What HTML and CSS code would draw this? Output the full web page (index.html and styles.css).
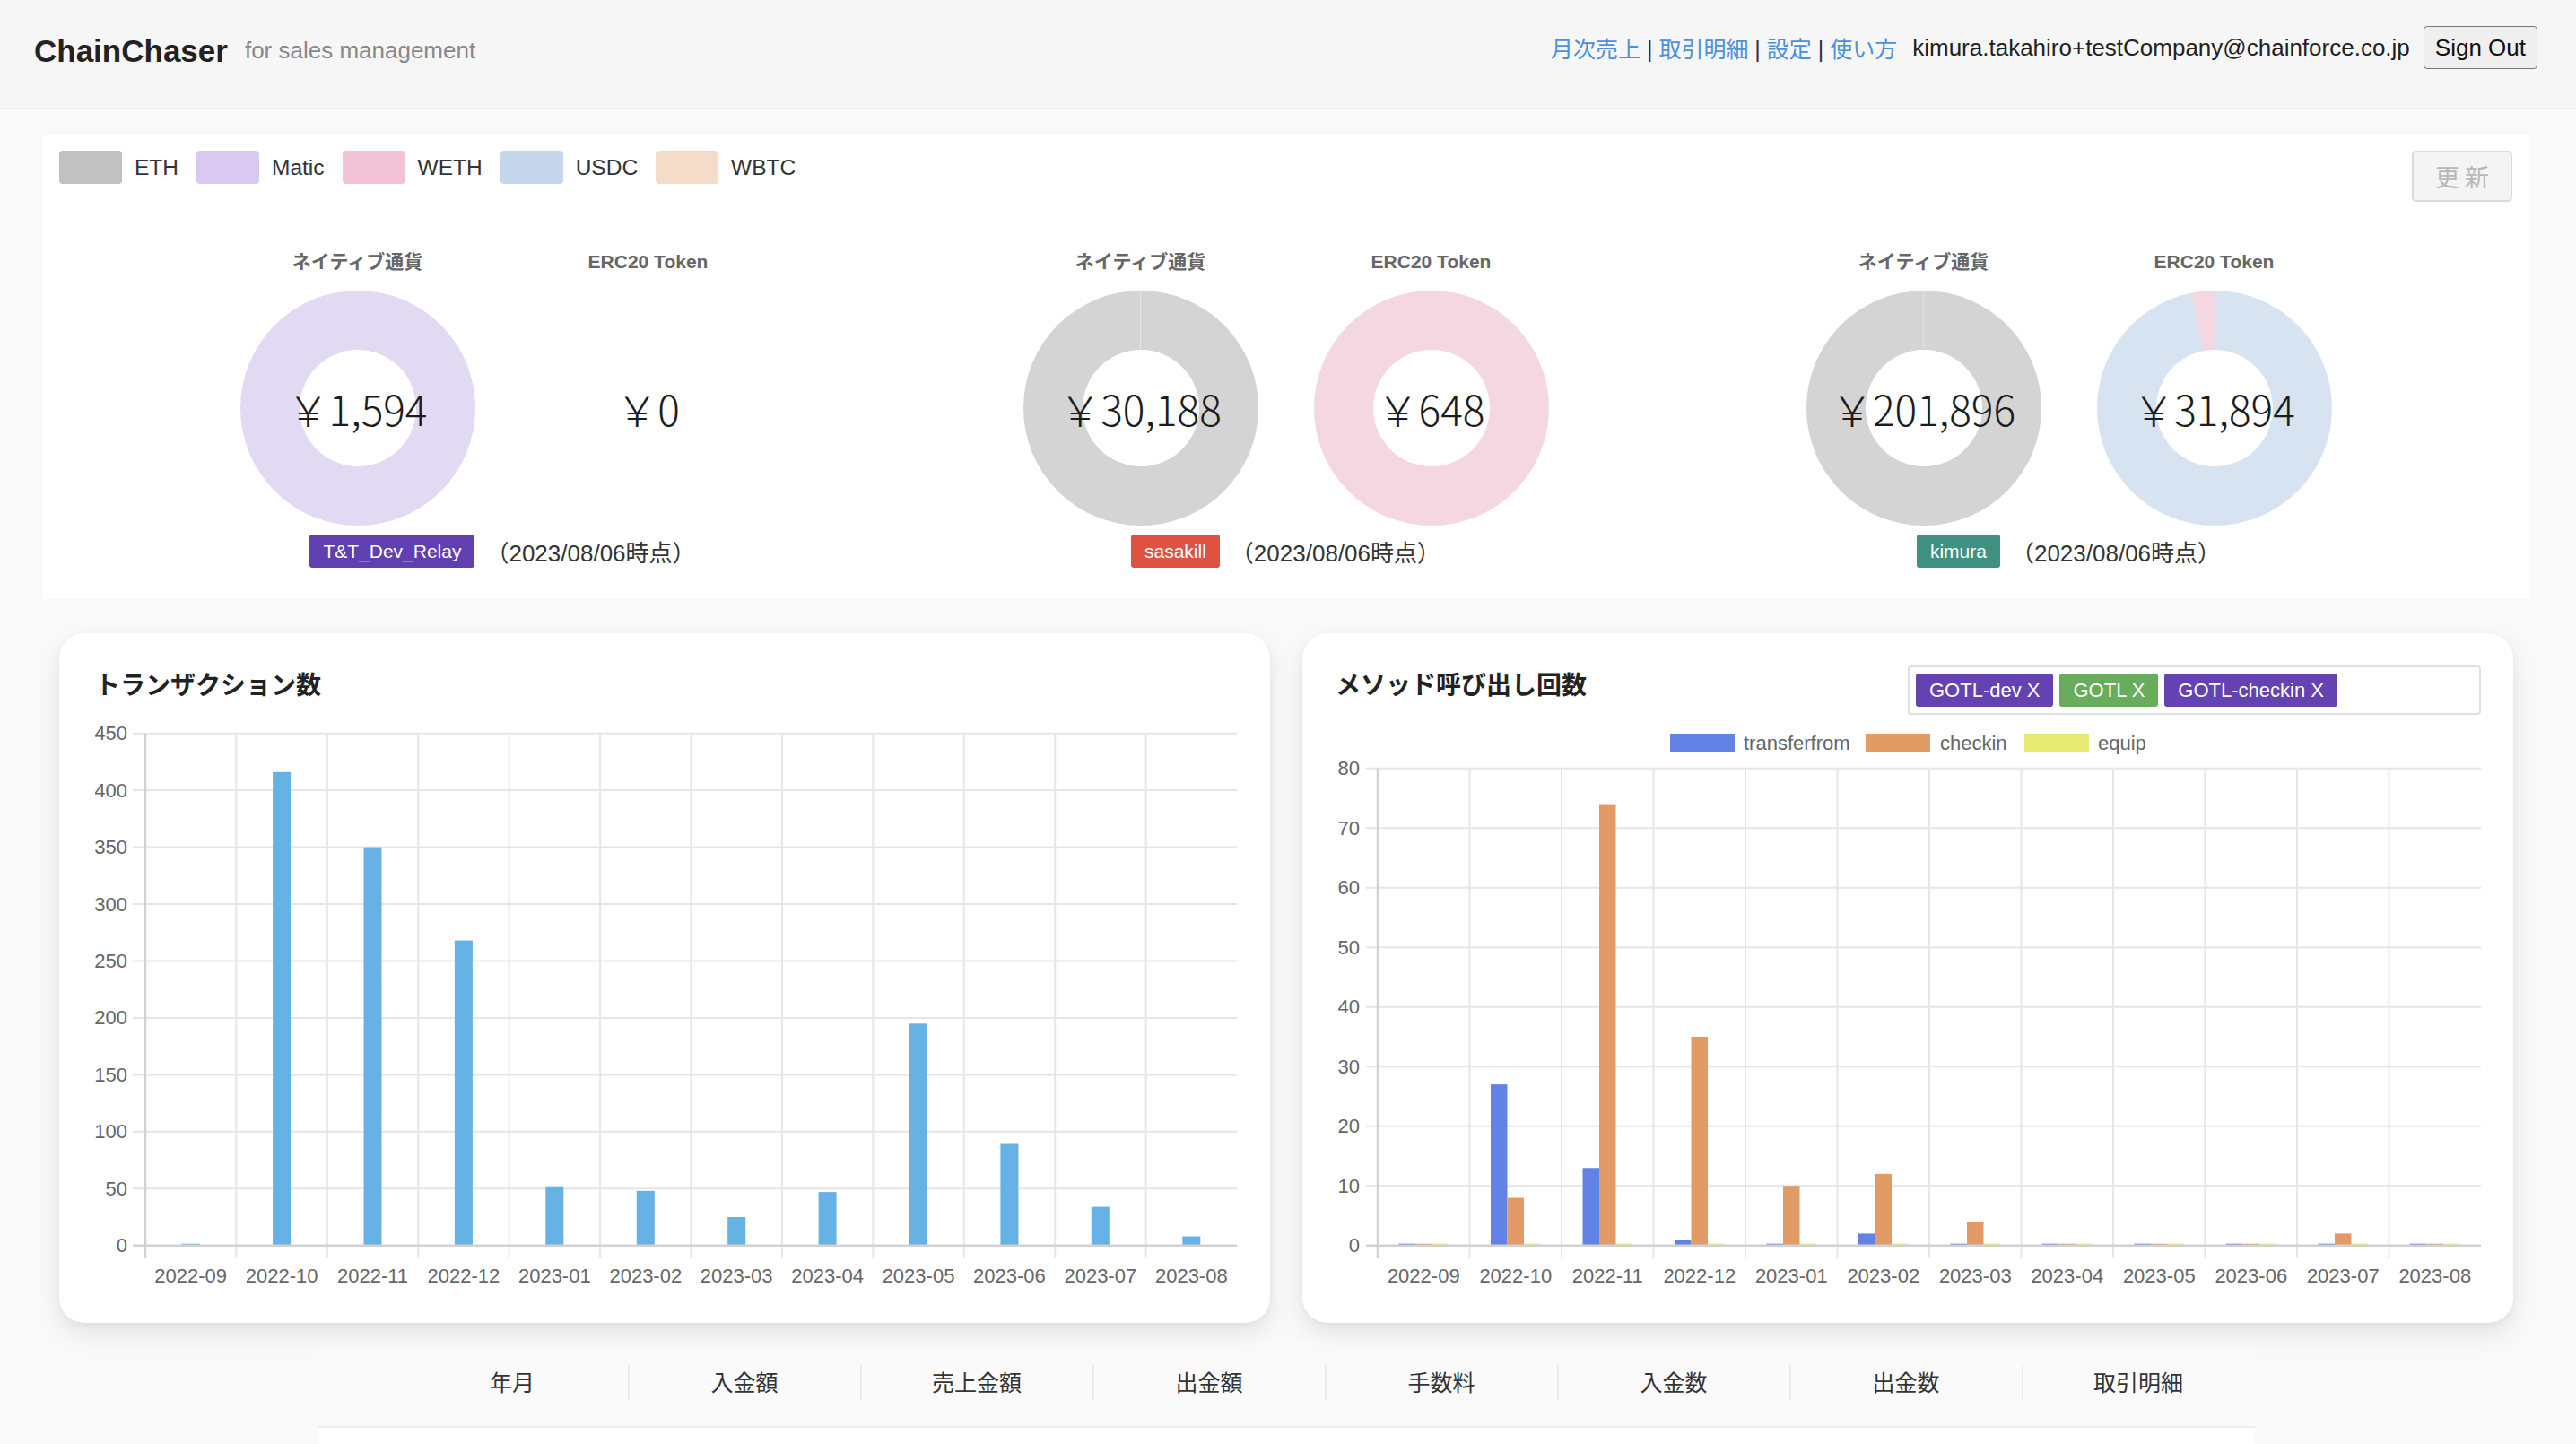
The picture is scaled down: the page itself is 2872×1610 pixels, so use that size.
FILE: index.html
```html
<!DOCTYPE html>
<html lang="ja">
<head>
<meta charset="utf-8">
<title>ChainChaser</title>
<link rel="stylesheet" href="styles.css">
</head>
<body>
<header class="topbar">
  <div class="brand">
    <span class="logo">ChainChaser</span>
    <span class="tagline">for sales management</span>
  </div>
  <div class="account">
    <nav class="links"><a href="#">月次売上</a> | <a href="#">取引明細</a> | <a href="#">設定</a> | <a href="#">使い方</a></nav>
    <span class="email">kimura.takahiro+testCompany@chainforce.co.jp</span>
    <button class="signout">Sign Out</button>
  </div>
</header>

<main class="main">
  <section class="panel">
    <div class="panel-top">
      <ul class="legend">
        <li><span class="sw sw-eth"></span>ETH</li>
        <li><span class="sw sw-matic"></span>Matic</li>
        <li><span class="sw sw-weth"></span>WETH</li>
        <li><span class="sw sw-usdc"></span>USDC</li>
        <li><span class="sw sw-wbtc"></span>WBTC</li>
      </ul>
      <button class="refresh">更 新</button>
    </div>

    <div class="groups">
      <div class="group">
        <div class="pair">
          <div class="col">
            <div class="col-title">ネイティブ通貨</div>
            <div class="donut d-matic"><span class="val">￥1,594</span></div>
          </div>
          <div class="col">
            <div class="col-title">ERC20 Token</div>
            <div class="donut empty"><span class="val">￥0</span></div>
          </div>
        </div>
        <div class="meta"><span class="badge b-purple">T&amp;T_Dev_Relay</span><span class="asof">（2023/08/06時点）</span></div>
      </div>

      <div class="group">
        <div class="pair">
          <div class="col">
            <div class="col-title">ネイティブ通貨</div>
            <div class="donut d-eth-a"><span class="val">￥30,188</span></div>
          </div>
          <div class="col">
            <div class="col-title">ERC20 Token</div>
            <div class="donut d-weth"><span class="val">￥648</span></div>
          </div>
        </div>
        <div class="meta"><span class="badge b-red">sasakill</span><span class="asof">（2023/08/06時点）</span></div>
      </div>

      <div class="group">
        <div class="pair">
          <div class="col">
            <div class="col-title">ネイティブ通貨</div>
            <div class="donut d-eth-b"><span class="val">￥201,896</span></div>
          </div>
          <div class="col">
            <div class="col-title">ERC20 Token</div>
            <div class="donut d-usdc"><span class="val">￥31,894</span></div>
          </div>
        </div>
        <div class="meta"><span class="badge b-teal">kimura</span><span class="asof">（2023/08/06時点）</span></div>
      </div>
    </div>
  </section>

  <section class="charts">
    <div class="card card-1">
      <div class="card-head">
        <h2 class="card-title">トランザクション数</h2>
      </div>
      <svg class="chart" width="1273" height="643" viewBox="0 0 1273 643">
        <g class="grid">
          <line x1="42" x2="1273" y1="528.3" y2="528.3"/>
          <line x1="42" x2="1273" y1="464.8" y2="464.8"/>
          <line x1="42" x2="1273" y1="401.4" y2="401.4"/>
          <line x1="42" x2="1273" y1="337.9" y2="337.9"/>
          <line x1="42" x2="1273" y1="274.5" y2="274.5"/>
          <line x1="42" x2="1273" y1="211" y2="211"/>
          <line x1="42" x2="1273" y1="147.6" y2="147.6"/>
          <line x1="42" x2="1273" y1="84.1" y2="84.1"/>
          <line x1="42" x2="1273" y1="20.7" y2="20.7"/>
          <line x1="157.4" x2="157.4" y1="20.7" y2="606"/>
          <line x1="258.8" x2="258.8" y1="20.7" y2="606"/>
          <line x1="360.3" x2="360.3" y1="20.7" y2="606"/>
          <line x1="461.7" x2="461.7" y1="20.7" y2="606"/>
          <line x1="563.1" x2="563.1" y1="20.7" y2="606"/>
          <line x1="664.5" x2="664.5" y1="20.7" y2="606"/>
          <line x1="765.9" x2="765.9" y1="20.7" y2="606"/>
          <line x1="867.3" x2="867.3" y1="20.7" y2="606"/>
          <line x1="968.8" x2="968.8" y1="20.7" y2="606"/>
          <line x1="1070.2" x2="1070.2" y1="20.7" y2="606"/>
          <line x1="1171.6" x2="1171.6" y1="20.7" y2="606"/>
        </g>
        <g class="bars-blue">
          <rect x="96.7" y="589.7" width="20" height="2"/>
          <rect x="198.1" y="63.8" width="20" height="527.9"/>
          <rect x="299.5" y="147.6" width="20" height="444.1"/>
          <rect x="400.9" y="251.6" width="20" height="340.1"/>
          <rect x="502.3" y="525.7" width="20" height="66"/>
          <rect x="603.8" y="530.8" width="20" height="60.9"/>
          <rect x="705.2" y="560" width="20" height="31.7"/>
          <rect x="806.6" y="532.1" width="20" height="59.6"/>
          <rect x="908" y="344.3" width="20" height="247.4"/>
          <rect x="1009.4" y="477.5" width="20" height="114.2"/>
          <rect x="1110.8" y="548.6" width="20" height="43.1"/>
          <rect x="1212.3" y="581.5" width="20" height="10.2"/>
        </g>
        <g class="axis">
          <line x1="42" x2="1273" y1="591.7" y2="591.7"/>
          <line x1="56" x2="56" y1="20.7" y2="606"/>
        </g>
        <g class="ylab">
          <text x="36" y="591.7">0</text>
          <text x="36" y="528.3">50</text>
          <text x="36" y="464.8">100</text>
          <text x="36" y="401.4">150</text>
          <text x="36" y="337.9">200</text>
          <text x="36" y="274.5">250</text>
          <text x="36" y="211">300</text>
          <text x="36" y="147.6">350</text>
          <text x="36" y="84.1">400</text>
          <text x="36" y="20.7">450</text>
        </g>
        <g class="xlab">
          <text x="106.7" y="625">2022-09</text>
          <text x="208.1" y="625">2022-10</text>
          <text x="309.5" y="625">2022-11</text>
          <text x="410.9" y="625">2022-12</text>
          <text x="512.3" y="625">2023-01</text>
          <text x="613.8" y="625">2023-02</text>
          <text x="715.2" y="625">2023-03</text>
          <text x="816.6" y="625">2023-04</text>
          <text x="918" y="625">2023-05</text>
          <text x="1019.4" y="625">2023-06</text>
          <text x="1120.8" y="625">2023-07</text>
          <text x="1222.3" y="625">2023-08</text>
        </g>
      </svg>
    </div>

    <div class="card card-2">
      <div class="card-head">
        <h2 class="card-title">メソッド呼び出し回数</h2>
        <div class="tagbox">
          <span class="tag t-purple">GOTL-dev X</span>
          <span class="tag t-green">GOTL X</span>
          <span class="tag t-purple">GOTL-checkin X</span>
        </div>
      </div>
      <svg class="chart" width="1277" height="643" viewBox="0 0 1277 643">
        <g class="legend2">
          <rect x="373" y="21" width="72" height="20" class="c-blue"/>
          <text x="455" y="31">transferfrom</text>
          <rect x="591" y="21" width="72" height="20" class="c-orange"/>
          <text x="674" y="31">checkin</text>
          <rect x="768" y="21" width="72" height="20" class="c-yellow"/>
          <text x="850" y="31">equip</text>
        </g>
        <g class="grid">
          <line x1="34" x2="1277" y1="525.2" y2="525.2"/>
          <line x1="34" x2="1277" y1="458.7" y2="458.7"/>
          <line x1="34" x2="1277" y1="392.2" y2="392.2"/>
          <line x1="34" x2="1277" y1="325.7" y2="325.7"/>
          <line x1="34" x2="1277" y1="259.2" y2="259.2"/>
          <line x1="34" x2="1277" y1="192.7" y2="192.7"/>
          <line x1="34" x2="1277" y1="126.2" y2="126.2"/>
          <line x1="34" x2="1277" y1="59.7" y2="59.7"/>
          <line x1="149.5" x2="149.5" y1="59.7" y2="606"/>
          <line x1="252" x2="252" y1="59.7" y2="606"/>
          <line x1="354.5" x2="354.5" y1="59.7" y2="606"/>
          <line x1="457" x2="457" y1="59.7" y2="606"/>
          <line x1="559.5" x2="559.5" y1="59.7" y2="606"/>
          <line x1="662" x2="662" y1="59.7" y2="606"/>
          <line x1="764.5" x2="764.5" y1="59.7" y2="606"/>
          <line x1="867" x2="867" y1="59.7" y2="606"/>
          <line x1="969.5" x2="969.5" y1="59.7" y2="606"/>
          <line x1="1072" x2="1072" y1="59.7" y2="606"/>
          <line x1="1174.5" x2="1174.5" y1="59.7" y2="606"/>
        </g>
        <g class="c-blue">
          <rect x="70.5" y="589.7" width="18.5" height="2"/>
          <rect x="173" y="412.15" width="18.5" height="179.55"/>
          <rect x="275.5" y="505.25" width="18.5" height="86.45"/>
          <rect x="378" y="585.05" width="18.5" height="6.65"/>
          <rect x="480.5" y="589.7" width="18.5" height="2"/>
          <rect x="583" y="578.4" width="18.5" height="13.3"/>
          <rect x="685.5" y="589.7" width="18.5" height="2"/>
          <rect x="788" y="589.7" width="18.5" height="2"/>
          <rect x="890.5" y="589.7" width="18.5" height="2"/>
          <rect x="993" y="589.7" width="18.5" height="2"/>
          <rect x="1095.5" y="589.7" width="18.5" height="2"/>
          <rect x="1198" y="589.7" width="18.5" height="2"/>
        </g>
        <g class="c-orange">
          <rect x="89" y="589.7" width="18.5" height="2"/>
          <rect x="191.5" y="538.5" width="18.5" height="53.2"/>
          <rect x="294" y="99.6" width="18.5" height="492.1"/>
          <rect x="396.5" y="358.95" width="18.5" height="232.75"/>
          <rect x="499" y="525.2" width="18.5" height="66.5"/>
          <rect x="601.5" y="511.9" width="18.5" height="79.8"/>
          <rect x="704" y="565.1" width="18.5" height="26.6"/>
          <rect x="806.5" y="589.7" width="18.5" height="2"/>
          <rect x="909" y="589.7" width="18.5" height="2"/>
          <rect x="1011.5" y="589.7" width="18.5" height="2"/>
          <rect x="1114" y="578.4" width="18.5" height="13.3"/>
          <rect x="1216.5" y="589.7" width="18.5" height="2"/>
        </g>
        <g class="c-yellow">
          <rect x="107.5" y="589.7" width="18.5" height="2"/>
          <rect x="210" y="589.7" width="18.5" height="2"/>
          <rect x="312.5" y="589.7" width="18.5" height="2"/>
          <rect x="415" y="589.7" width="18.5" height="2"/>
          <rect x="517.5" y="589.7" width="18.5" height="2"/>
          <rect x="620" y="589.7" width="18.5" height="2"/>
          <rect x="722.5" y="589.7" width="18.5" height="2"/>
          <rect x="825" y="589.7" width="18.5" height="2"/>
          <rect x="927.5" y="589.7" width="18.5" height="2"/>
          <rect x="1030" y="589.7" width="18.5" height="2"/>
          <rect x="1132.5" y="589.7" width="18.5" height="2"/>
          <rect x="1235" y="589.7" width="18.5" height="2"/>
        </g>
        <g class="axis">
          <line x1="34" x2="1277" y1="591.7" y2="591.7"/>
          <line x1="47" x2="47" y1="59.7" y2="606"/>
        </g>
        <g class="ylab">
          <text x="27" y="591.7">0</text>
          <text x="27" y="525.2">10</text>
          <text x="27" y="458.7">20</text>
          <text x="27" y="392.2">30</text>
          <text x="27" y="325.7">40</text>
          <text x="27" y="259.2">50</text>
          <text x="27" y="192.7">60</text>
          <text x="27" y="126.2">70</text>
          <text x="27" y="59.7">80</text>
        </g>
        <g class="xlab">
          <text x="98.25" y="625">2022-09</text>
          <text x="200.75" y="625">2022-10</text>
          <text x="303.25" y="625">2022-11</text>
          <text x="405.75" y="625">2022-12</text>
          <text x="508.25" y="625">2023-01</text>
          <text x="610.75" y="625">2023-02</text>
          <text x="713.25" y="625">2023-03</text>
          <text x="815.75" y="625">2023-04</text>
          <text x="918.25" y="625">2023-05</text>
          <text x="1020.75" y="625">2023-06</text>
          <text x="1123.25" y="625">2023-07</text>
          <text x="1225.75" y="625">2023-08</text>
        </g>
      </svg>
    </div>
  </section>

  <section class="table">
    <div class="thead">
      <div class="th-blank"></div>
      <div class="th first">年月</div>
      <div class="th">入金額</div>
      <div class="th">売上金額</div>
      <div class="th">出金額</div>
      <div class="th">手数料</div>
      <div class="th">入金数</div>
      <div class="th">出金数</div>
      <div class="th">取引明細</div>
    </div>
    <div class="tbody"></div>
  </section>
</main>
</body>
</html>
```

FILE: styles.css
```css
* { box-sizing: border-box; }

body {
  margin: 0;
  background: #f9f9f9;
  font-family: "Liberation Sans", "Noto Sans CJK JP", sans-serif;
  color: #333;
}

/* Header */
.topbar {
  height: 122px;
  background: #f6f6f6;
  border-bottom: 2px solid #ebebeb;
  display: flex;
  align-items: center;
  justify-content: space-between;
  padding: 0 43px 14px 38px;
}
.brand {
  display: flex;
  align-items: center;
  margin-top: 6px;
}
.logo {
  font-size: 35px;
  font-weight: 700;
  color: #222;
  line-height: 1;
}
.tagline {
  font-size: 26px;
  color: #888;
  margin-left: 19px;
  line-height: 1;
}
.account {
  display: flex;
  align-items: center;
}
.links {
  font-size: 25px;
  color: #333;
  font-family: "Liberation Sans", "Noto Sans CJK JP", sans-serif;
}
.links a {
  color: #4a90e2;
  text-decoration: none;
}
.email {
  font-size: 26px;
  color: #222;
  margin-left: 17px;
}
.signout {
  margin-left: 15px;
  height: 48px;
  padding: 0 12px;
  font-family: "Liberation Sans", sans-serif;
  font-size: 26px;
  background: #efefef;
  border: 1px solid #767676;
  border-radius: 4px;
  color: #111;
}

/* Main */
.main {
  padding: 28px 52px 0 48px;
}

.panel {
  background: #fff;
  padding: 18px 19px 35px 18px;
}
.panel-top {
  display: flex;
  justify-content: space-between;
  align-items: flex-start;
}
.legend {
  display: flex;
  list-style: none;
  margin: 0;
  padding: 0;
  gap: 20px;
}
.legend li {
  display: flex;
  align-items: center;
  gap: 14px;
  height: 37px;
  font-size: 24.5px;
  color: #333;
}
.sw {
  width: 70px;
  height: 37px;
  border-radius: 4px;
}
.sw-eth { background: #c1c1c1; }
.sw-matic { background: #d9c9f1; }
.sw-weth { background: #f2c2d6; }
.sw-usdc { background: #c5d5eb; }
.sw-wbtc { background: #f5dcc9; }

.refresh {
  width: 112px;
  height: 57px;
  background: #f4f4f4;
  border: 2px solid #dadada;
  border-radius: 5px;
  color: #b8b8b8;
  font-family: "Noto Sans CJK JP", sans-serif;
  font-size: 27px;
  padding: 0;
}

.groups {
  display: grid;
  grid-template-columns: repeat(3, 1fr);
  margin: 54px 58px 0;
}
.group {
  display: flex;
  flex-direction: column;
  align-items: center;
}
.pair {
  display: flex;
}
.col {
  width: 324px;
  display: flex;
  flex-direction: column;
  align-items: center;
}
.col-title {
  font-size: 21px;
  font-weight: 700;
  color: #666;
  line-height: 26px;
}
.donut {
  margin-top: 19px;
  width: 262px;
  height: 262px;
  border-radius: 50%;
  display: grid;
  place-items: center;
}
.donut::before {
  content: "";
  grid-area: 1 / 1;
  width: 130px;
  height: 130px;
  border-radius: 50%;
  background: #fff;
}
.donut.empty { background: none; }
.donut.empty::before { display: none; }
.donut .val {
  grid-area: 1 / 1;
  position: relative;
  z-index: 1;
  font-family: "Noto Sans CJK JP", sans-serif;
  font-weight: 300;
  font-size: 46px;
  line-height: 1;
  color: #1c1c1c;
  white-space: nowrap;
}
.d-matic { background: #e2d9f3; }
.d-weth { background: #f5d7e2; }
.d-eth-a { background: conic-gradient(#d4d4d4 0deg 359.4deg, #e6e3ea 359.4deg 360deg); }
.d-eth-b { background: conic-gradient(#d4d4d4 0deg 359.5deg, #e2d9f3 359.5deg 360deg); }
.d-usdc { background: conic-gradient(#d8e3f1 0deg 348.8deg, #f5d7e2 348.8deg 360deg); }

.meta {
  display: flex;
  align-items: center;
  gap: 12px;
  margin-top: 10px;
  height: 37px;
}
.badge {
  height: 37px;
  line-height: 37px;
  padding: 0 15px;
  font-size: 21px;
  color: #fff;
  border-radius: 3px;
}
.b-purple { background: #6040b0; }
.b-red { background: #e05241; }
.b-teal { background: #3f9282; }
.asof {
  font-size: 26px;
  color: #333;
}

/* Charts */
.charts {
  display: grid;
  grid-template-columns: 1fr 1fr;
  gap: 36px;
  margin: 38px 18px 0;
}
.card {
  background: #fff;
  border-radius: 28px;
  height: 769px;
  padding: 36px 37px 0 40px;
  box-shadow: 0 12px 28px rgba(0, 0, 0, 0.09), 0 2px 8px rgba(0, 0, 0, 0.04);
}
.card-2 {
  padding: 36px 36px 0 37px;
}
.card-head {
  display: flex;
  justify-content: space-between;
  height: 55px;
}
.card-title {
  margin: 6px 0 0;
  font-size: 28px;
  font-weight: 700;
  color: #222;
  line-height: 34px;
}
.tagbox {
  width: 639px;
  height: 55px;
  border: 2px solid #e0e0e0;
  border-radius: 4px;
  display: flex;
  align-items: center;
  gap: 7px;
  padding: 0 7px;
}
.tag {
  height: 37px;
  line-height: 37px;
  padding: 0 15px;
  font-size: 22px;
  color: #fff;
  border-radius: 3px;
}
.t-purple { background: #6442b2; }
.t-green { background: #67ad5b; }

.chart { display: block; }
.chart text {
  font-family: "Liberation Sans", sans-serif;
  font-size: 22px;
  fill: #666;
  dominant-baseline: central;
}
.chart .grid line {
  stroke: #e6e6e6;
  stroke-width: 2;
}
.chart .axis line {
  stroke: #d2d2d2;
  stroke-width: 2.5;
}
.chart .ylab text { text-anchor: end; }
.chart .xlab text { text-anchor: middle; }
.bars-blue rect { fill: #67b2e5; }
.c-blue, .c-blue rect { fill: #6282e6; }
.c-orange, .c-orange rect { fill: #e39b66; }
.c-yellow, .c-yellow rect { fill: #e8eb73; }

/* Table */
.table {
  width: 2159px;
  margin: 18px auto 0;
}
.thead {
  display: flex;
  align-items: center;
  height: 99px;
  background: #fafafa;
  border-bottom: 2px solid #eeeeee;
}
.th-blank { width: 86px; }
.th {
  width: 259px;
  height: 40px;
  line-height: 40px;
  text-align: center;
  font-size: 25px;
  color: #333;
  border-left: 2px solid #ececec;
}
.th.first { border-left-color: transparent; }
.tbody {
  height: 60px;
  background: #fff;
}
```
